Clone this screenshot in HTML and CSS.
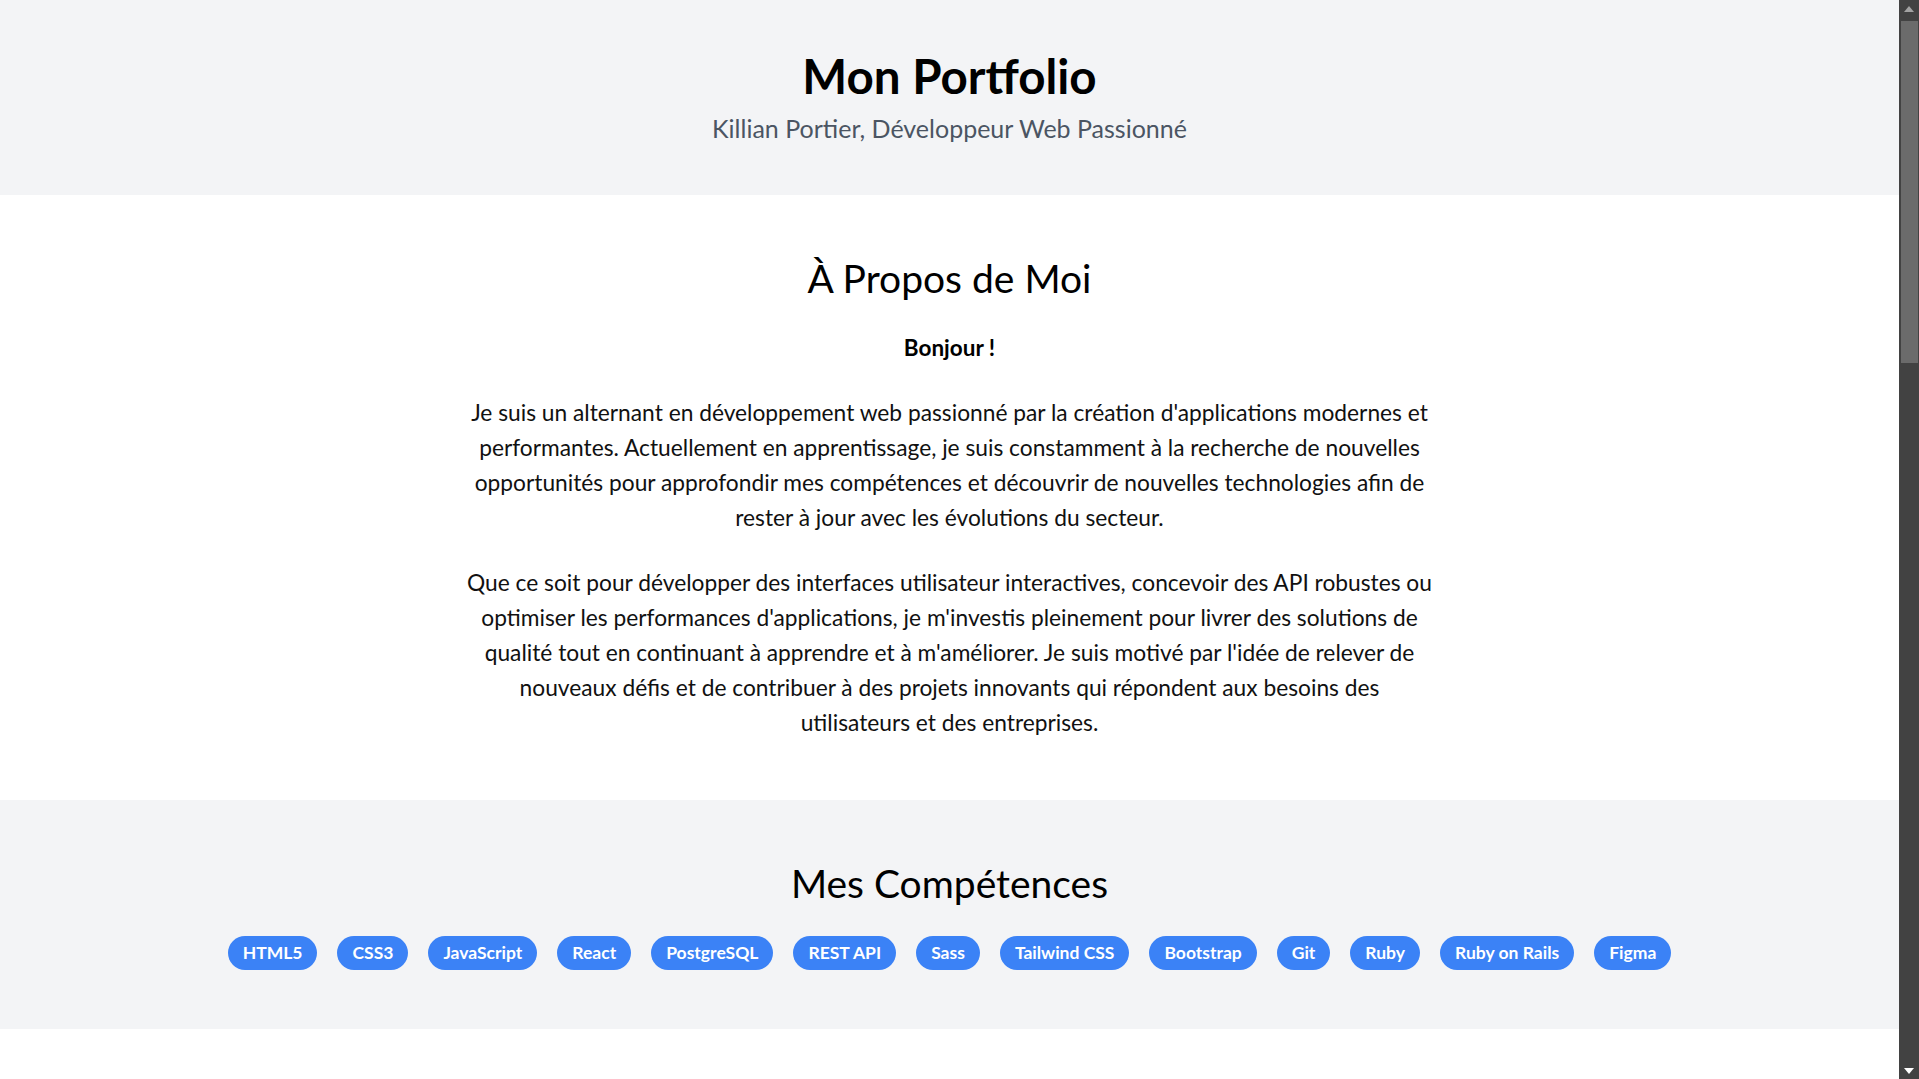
FILE: index.html
```html
<!DOCTYPE html>
<html lang="fr">
<head>
<meta charset="utf-8">
<title>Mon Portfolio</title>
<link rel="stylesheet" href="styles.css">
</head>
<body>
<header class="hero">
  <h1 class="hero-title">Mon Portfolio</h1>
  <p class="hero-subtitle">Killian Portier, Développeur Web Passionné</p>
</header>

<section class="section section-white section-about">
  <div class="container">
    <h2 class="section-title about-title">À Propos de Moi</h2>
    <p class="greeting">Bonjour !</p>
    <p class="about-text">Je suis un alternant en développement web passionné par la création d'applications modernes et performantes. Actuellement en apprentissage, je suis constamment à la recherche de nouvelles opportunités pour approfondir mes compétences et découvrir de nouvelles technologies afin de rester à jour avec les évolutions du secteur.</p>
    <p class="about-text">Que ce soit pour développer des interfaces utilisateur interactives, concevoir des API robustes ou optimiser les performances d'applications, je m'investis pleinement pour livrer des solutions de qualité tout en continuant à apprendre et à m'améliorer. Je suis motivé par l'idée de relever de nouveaux défis et de contribuer à des projets innovants qui répondent aux besoins des utilisateurs et des entreprises.</p>
  </div>
</section>

<section class="section section-gray">
  <div class="container-wide">
    <h2 class="section-title">Mes Compétences</h2>
    <ul class="skills">
      <li class="skill">HTML5</li>
      <li class="skill">CSS3</li>
      <li class="skill">JavaScript</li>
      <li class="skill">React</li>
      <li class="skill">PostgreSQL</li>
      <li class="skill">REST API</li>
      <li class="skill">Sass</li>
      <li class="skill">Tailwind CSS</li>
      <li class="skill">Bootstrap</li>
      <li class="skill">Git</li>
      <li class="skill">Ruby</li>
      <li class="skill">Ruby on Rails</li>
      <li class="skill">Figma</li>
    </ul>
  </div>
</section>

<section class="section-rest"></section>

<div class="scrollbar" aria-hidden="true">
  <div class="scrollbar-btn">
    <svg width="10" height="6" viewBox="0 0 10 6"><polygon points="5,0 10,6 0,6" fill="#a3a3a3"/></svg>
  </div>
  <div class="scrollbar-track">
    <div class="scrollbar-thumb"></div>
  </div>
  <div class="scrollbar-btn">
    <svg width="10" height="6" viewBox="0 0 10 6"><polygon points="0,0 10,0 5,6" fill="#ffffff"/></svg>
  </div>
</div>
</body>
</html>
```
FILE: styles.css
```css
html {
  background: #ffffff;
}

body {
  margin: 0 20px 0 0;
  font-family: Lato, "Open Sans", "Noto Sans", sans-serif;
  color: #111111;
  background: #ffffff;
}

.hero {
  background: #f3f4f6;
  padding: 51px 0 49px;
  text-align: center;
}
.hero-title {
  margin: 0;
  font-size: 47.5px;
  line-height: 50px;
  font-weight: 700;
  color: #000000;
}
.hero-subtitle {
  margin: 10px 0 0;
  font-size: 25px;
  line-height: 35px;
  color: #4b5563;
}

.section {
  padding: 61px 0 59px;
}
.section-about {
  padding-bottom: 60px;
}
.section-white {
  background: #ffffff;
}
.section-gray {
  background: #f3f4f6;
}
.section-rest {
  height: 49px;
  background: #ffffff;
}

.container {
  max-width: 968px;
  margin: 0 auto;
  text-align: center;
}
.container-wide {
  max-width: 1500px;
  margin: 0 auto;
  text-align: center;
}

.section-title {
  margin: 0 0 30px;
  font-size: 39px;
  line-height: 45px;
  font-weight: 400;
  color: #000000;
}
.about-title {
  margin-bottom: 29px;
}
.greeting {
  margin: 0 0 30px;
  font-size: 22.5px;
  line-height: 35px;
  font-weight: 700;
  color: #000000;
}
.about-text {
  margin: 0 0 30px;
  font-size: 22.75px;
  line-height: 35px;
}
.about-text:last-child {
  margin-bottom: 0;
}

.skills {
  list-style: none;
  margin: 0;
  padding: 0;
  display: flex;
  flex-wrap: wrap;
  justify-content: center;
  gap: 20px;
}
.skill {
  background: #3b82f6;
  color: #ffffff;
  border-radius: 9999px;
  padding: 5px 15px;
  font-size: 17.5px;
  line-height: 24px;
  font-weight: 700;
}

/* faux scrollbar drawn over the right edge of the window */
.scrollbar {
  position: fixed;
  top: 0;
  right: 0;
  width: 20px;
  height: 100vh;
  background: #424242;
  display: flex;
  flex-direction: column;
}
.scrollbar-btn {
  height: 17px;
  display: flex;
  align-items: center;
  justify-content: center;
  flex: none;
}
.scrollbar-track {
  flex: 1;
  padding: 4px 1px 0 2px;
}
.scrollbar-thumb {
  height: 342px;
  background: #6b6b6b;
}
```
